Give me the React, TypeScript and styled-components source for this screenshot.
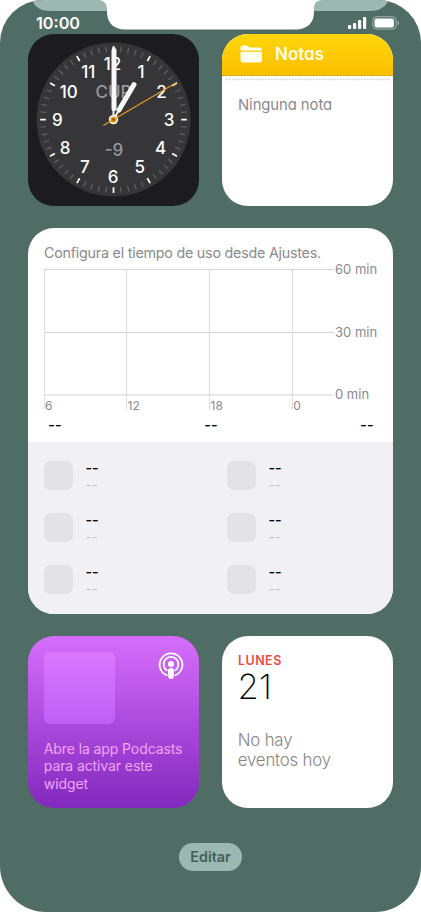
import React from "react";
import styled, { createGlobalStyle } from "styled-components";

const GlobalStyle = createGlobalStyle`
  * { box-sizing: border-box; }
  body { margin: 0; background: #fff; font-family: Inter, "Liberation Sans", sans-serif; }
`;

const Screen = styled.main`
  position: relative;
  display: flex;
  flex-direction: column;
  align-items: flex-start;
  width: 421px;
  height: 912px;
  overflow: hidden;
  background: #4f6c65;
  border-radius: 43px 43px 46px 46px;
`;

const NotchLayer = styled.svg`
  position: absolute;
  top: 0;
  left: 0;
`;

const StatusBar = styled.header`
  position: relative;
  display: flex;
  justify-content: space-between;
  width: 100%;
  height: 33.5px;
  padding: 13px 22px 0 36px;
`;

const Time = styled.span`
  color: #fff;
  font-size: 16.2px;
  line-height: 20px;
  font-weight: 600;
`;

const StatusIconsSvg = styled.svg`
  display: block;
  margin-top: 3px;
`;

const Widgets = styled.div`
  display: grid;
  grid-template-columns: 171.5px 171.5px;
  grid-template-rows: 172px 385.5px 172px;
  column-gap: 22.5px;
  row-gap: 22.5px;
  width: 365.5px;
  margin-left: 27.5px;
`;

const Card = styled.section<{ $bg?: string; $wide?: boolean }>`
  display: flex;
  flex-direction: column;
  overflow: hidden;
  border-radius: 26px;
  background: ${(p) => p.$bg ?? "#fff"};
  grid-column: ${(p) => (p.$wide ? "1 / -1" : "auto")};
`;

const NotesHeader = styled.div`
  display: flex;
  align-items: center;
  gap: 12.5px;
  height: 42px;
  flex: none;
  padding-left: 18px;
  background: linear-gradient(#ffd60a, #fbc002);
  border-bottom: 1px solid #dfae12;
`;

const NotesTitle = styled.h2`
  margin: 0;
  color: #fffde8;
  font-size: 17px;
  line-height: 24px;
  font-weight: 600;
  font-feature-settings: "cv11";
`;

const Perforation = styled.svg`
  display: block;
  margin-top: 2px;
  flex: none;
`;

const NotesBody = styled.p`
  margin: 14.5px 0 0 16.5px;
  color: #8a8a8c;
  font-size: 14.8px;
  line-height: 20px;
  letter-spacing: -0.05px;
  font-feature-settings: "cv11";
`;

const UsageTop = styled.div`
  height: 213.5px;
  flex: none;
  padding: 15px 15.5px 0 16px;
`;

const UsageTitle = styled.p`
  margin: 0 0 0 0.5px;
  color: #8a8a8e;
  font-size: 14.3px;
  line-height: 20px;
  letter-spacing: -0.23px;
  white-space: nowrap;
`;

const ChartRow = styled.div`
  display: flex;
  height: 153px;
`;

const ChartSvg = styled.svg`
  display: block;
  flex: none;
`;

const MinuteLabels = styled.div`
  display: flex;
  flex-direction: column;
  justify-content: space-between;
  height: 143px;
  margin: -2.6px 0 0 0.5px;
`;

const AxisLabel = styled.span`
  color: #8a8a8e;
  font-size: 13px;
  line-height: 18px;
  white-space: nowrap;
`;

const Totals = styled.div`
  display: flex;
  justify-content: space-between;
  padding: 1px 4px 0 4.8px;
  height: 20px;
`;

const AppGrid = styled.div`
  display: grid;
  grid-template-columns: 183px 1fr;
  grid-auto-rows: 30px;
  row-gap: 22px;
  flex: 1;
  padding: 19px 16px 0;
  background: #f1f0f5;
`;

const AppRow = styled.div`
  display: flex;
  gap: 12.5px;
`;

const AppIcon = styled.div`
  width: 29.5px;
  height: 29.5px;
  border-radius: 7px;
  background: #e3e2e7;
`;

const AppLines = styled.div`
  display: flex;
  flex-direction: column;
  gap: 1.5px;
  margin-top: -1px;
`;

const DashText = styled.span<{ $muted?: boolean; $size: number }>`
  color: ${(p) => (p.$muted ? "#c4c4c8" : "#000")};
  font-size: ${(p) => p.$size}px;
  line-height: 16px;
  font-weight: ${(p) => (p.$muted ? 400 : 500)};
  white-space: nowrap;
`;

const PodcastTop = styled.div`
  display: flex;
  justify-content: space-between;
  align-items: flex-start;
  padding: 16px 15.5px 0 16px;
`;

const Artwork = styled.div`
  width: 71.5px;
  height: 72px;
  border-radius: 6px;
  background: linear-gradient(#d978ff, #bd60f5);
`;

const PodcastText = styled.p`
  margin: 16px 0 0 16.3px;
  color: #f1a4ff;
  font-size: 14px;
  line-height: 17.4px;
  letter-spacing: -0.1px;
  white-space: pre-line;
`;

const Weekday = styled.span`
  margin: 16px 0 0 16.5px;
  color: #eb4d43;
  font-size: 12.5px;
  line-height: 17px;
  font-weight: 600;
  letter-spacing: 0.45px;
`;

const DayNumber = styled.span`
  margin: 1px 0 0 16px;
  color: #000;
  font-size: 34.5px;
  line-height: 34px;
  font-weight: 250;
`;

const EventText = styled.p`
  margin: 25.5px 0 0 16.3px;
  color: #858585;
  font-size: 16.8px;
  line-height: 20.5px;
  font-weight: 350;
  letter-spacing: -0.18px;
  white-space: pre-line;
`;

const EditButton = styled.button`
  align-self: center;
  width: 63px;
  height: 28px;
  margin-top: 35px;
  padding: 0;
  border: 0;
  border-radius: 14px;
  background: #9db7b1;
  color: #3f6259;
  font: 600 14.3px/28px Inter, sans-serif;
`;

const ClockText = styled.text<{ $dim?: boolean }>`
  fill: ${(p) => (p.$dim ? "#98989c" : "#fff")};
  font-family: Inter, sans-serif;
  font-size: 17px;
  font-weight: 500;
  text-anchor: middle;
`;

function Notch() {
  return (
    <NotchLayer width="421" height="34" viewBox="0 0 421 34">
      <path d="M32 0H389C385 8 378 11 370 11H50C42 11 35 8 32 0Z" fill="#9db7b1" />
      <path d="M99 0C104 .5 107 4 107 9V12C107 23 114 29.5 125 29.5H296C307 29.5 314 23 314 12V9C314 4 316 .5 322 0Z" fill="#fff" />
    </NotchLayer>
  );
}

function StatusIcons() {
  return (
    <StatusIconsSvg width="52" height="14" viewBox="347 16 52 14">
      <g fill="#fff">
        <rect x="348" y="25" width="3.2" height="4" rx="1" />
        <rect x="353" y="23" width="3.2" height="6" rx="1" />
        <rect x="358" y="20" width="3.2" height="9" rx="1" />
        <rect x="363" y="17" width="3.2" height="12" rx="1" />
        <rect x="374.5" y="18.5" width="19.5" height="9" rx="2" />
        <path d="M397.7 20.8c1.6 1 1.6 3.3 0 4.3z" opacity=".6" />
      </g>
      <rect x="372.8" y="16.8" width="23.4" height="12.2" rx="3.6" fill="none" stroke="#fff" strokeOpacity=".5" />
    </StatusIconsSvg>
  );
}

const numerals: [string, number, number][] = [
  ["12", 85, 30], ["1", 113.5, 38.3], ["2", 134, 58.5], ["3", 141.5, 86], ["4", 133.2, 114], ["5", 112.3, 133],
  ["6", 85.7, 142.7], ["7", 57.3, 133], ["8", 37.7, 114], ["9", 29.8, 86], ["10", 41.3, 58.5], ["11", 60.8, 38.3],
];

function Clock() {
  return (
    <svg width="171.5" height="172" viewBox="0.5 0.4 171.5 172">
      <circle cx="86" cy="86" r="77" fill="#363638" />
      {Array.from({ length: 60 }, (_, i) => (
        <line
          key={i}
          x1="86" x2="86" y1="12.7" y2="18.3"
          stroke={i % 5 ? "#626265" : "#fff"}
          strokeWidth={i % 5 ? 1.2 : 1.7}
          transform={`rotate(${i * 6} 86 86)`}
        />
      ))}
      <ClockText $dim x="86" y="64.3">CUP</ClockText>
      <ClockText $dim x="86.5" y="122.3">-9</ClockText>
      {numerals.map(([n, x, y]) => (
        <ClockText key={n} x={x} y={y + 6.4}>{n}</ClockText>
      ))}
      <g stroke="#f7f7f7" strokeLinecap="round">
        <path d="M86 86V72M86 86L91 77.5" strokeWidth="2" />
        <path d="M91.5 76.5L106.5 51" strokeWidth="5" />
        <path d="M86.5 75V17" strokeWidth="5" />
        <path d="M86.3 18V14.5" strokeWidth="3" />
      </g>
      <circle cx="86" cy="86" r="4.7" fill="#fff" />
      <path d="M75.8 92L149.5 48.7" stroke="#e99b20" strokeWidth="1.2" />
      <circle cx="86" cy="86" r="2.4" fill="#8b641d" stroke="#f69a0b" strokeWidth="1.6" />
    </svg>
  );
}

function FolderIcon() {
  return (
    <svg width="23" height="18" viewBox="0 0 23 18" fill="#fffdf0">
      <path d="M.5 5.4V3C.5 1.4 1.4.6 3 .6h3.2c1 0 1.5.2 2.1.7l.9.7c.5.4.9.5 1.7.5h8.6c1.6 0 2.4.9 2.4 2.4v.5Z" />
      <path d="M.5 6.8h21.5v8.1c0 1.6-.9 2.5-2.5 2.5H3C1.4 17.4.5 16.5.5 14.9Z" />
    </svg>
  );
}

function Chart() {
  return (
    <ChartSvg width="291" height="151" viewBox="44 263 291 151">
      <g stroke="#d5d5d6">
        <path d="M44 269.5H334M44 332.5H334M44 395H334" />
        <path d="M44.5 270V410M126.5 270V410M209.5 270V410M292.5 270V410" strokeDasharray="3 1" />
      </g>
      <g fill="#8a8a8e" fontSize="12" fontFamily="Inter, sans-serif">
        <text x="45" y="410">6</text>
        <text x="127.5" y="410">12</text>
        <text x="210.5" y="410">18</text>
        <text x="293.3" y="410">0</text>
      </g>
    </ChartSvg>
  );
}

function PodcastIcon() {
  return (
    <svg width="26" height="28" viewBox="0 0 26 28">
      <g fill="none" stroke="#fff" strokeWidth="1.8" strokeLinecap="round">
        <path d="M8.6 23.2A11.4 11.4 0 1 1 17.4 23.2" />
        <path d="M8.7 18.3A7.4 7.4 0 1 1 17.3 18.3" />
      </g>
      <circle cx="13" cy="12" r="3" fill="#fff" />
      <path d="M9.9 18.6Q9.9 16.1 13 16.1Q16.1 16.1 16.1 18.6L15.8 24.7Q15.6 27 13 27Q10.4 27 10.2 24.7Z" fill="#fff" />
    </svg>
  );
}

export default function App() {
  return (
    <>
      <GlobalStyle />
      <Screen>
        <Notch />
        <StatusBar>
          <Time>10:00</Time>
          <StatusIcons />
        </StatusBar>
        <Widgets>
          <Card $bg="#1c1c1e"><Clock /></Card>
          <Card>
            <NotesHeader><FolderIcon /><NotesTitle>Notas</NotesTitle></NotesHeader>
            <Perforation width="171" height="3" viewBox="0 0 171 3">
              <path d="M4 1.5H168" stroke="#cfcfcf" strokeWidth="1.5" strokeDasharray="1.5 1.5" />
            </Perforation>
            <NotesBody>Ninguna nota</NotesBody>
          </Card>
          <Card $wide>
            <UsageTop>
              <UsageTitle>Configura el tiempo de uso desde Ajustes.</UsageTitle>
              <ChartRow>
                <Chart />
                <MinuteLabels>
                  {["60 min", "30 min", "0 min"].map((t) => <AxisLabel key={t}>{t}</AxisLabel>)}
                </MinuteLabels>
              </ChartRow>
              <Totals>
                {[0, 1, 2].map((i) => <DashText key={i} $size={14.3}>--</DashText>)}
              </Totals>
            </UsageTop>
            <AppGrid>
              {Array.from({ length: 6 }, (_, i) => (
                <AppRow key={i}>
                  <AppIcon />
                  <AppLines>
                    <DashText $size={14.3}>--</DashText>
                    <DashText $size={13} $muted>--</DashText>
                  </AppLines>
                </AppRow>
              ))}
            </AppGrid>
          </Card>
          <Card $bg="linear-gradient(#d66dfc, #8229bd)">
            <PodcastTop><Artwork /><PodcastIcon /></PodcastTop>
            <PodcastText>{"Abre la app Podcasts\npara activar este\nwidget"}</PodcastText>
          </Card>
          <Card>
            <Weekday>LUNES</Weekday>
            <DayNumber>21</DayNumber>
            <EventText>{"No hay\neventos hoy"}</EventText>
          </Card>
        </Widgets>
        <EditButton>Editar</EditButton>
      </Screen>
    </>
  );
}
